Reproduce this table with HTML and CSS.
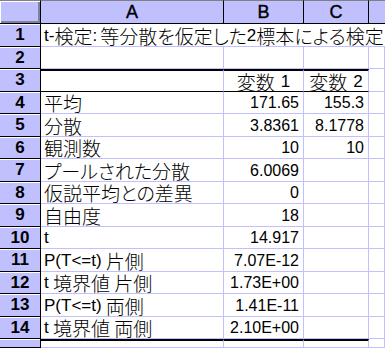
FILE: index.html
```html
<!DOCTYPE html>
<html lang="ja">
<head>
<meta charset="utf-8">
<link rel="stylesheet" href="styles.css">
</head>
<body>
<div class="sheet">
  <div class="corner"></div>
  <div class="ch">A</div>
  <div class="ch">B</div>
  <div class="ch">C</div>
  <div class="ch last"></div>

  <div class="rh">1</div>
  <div class="c title"><span class="lat">t-</span>検定<span class="lat gap">:</span>等分散を仮定した<span class="lat">2</span>標本による検定</div>

  <div class="rh">2</div>
  <div class="c"></div><div class="c"></div><div class="c"></div><div class="c"></div>

  <div class="rh">3</div>
  <div class="c top2 bot1"></div>
  <div class="c top2 bot1 mid">変数<span class="lat idx">1</span></div>
  <div class="c top2 bot1 mid">変数<span class="lat idx">2</span></div>
  <div class="c"></div>

  <div class="rh">4</div>
  <div class="c">平均</div><div class="c num">171.65</div><div class="c num">155.3</div><div class="c"></div>

  <div class="rh">5</div>
  <div class="c">分散</div><div class="c num">3.8361</div><div class="c num">8.1778</div><div class="c"></div>

  <div class="rh">6</div>
  <div class="c">観測数</div><div class="c num">10</div><div class="c num">10</div><div class="c"></div>

  <div class="rh">7</div>
  <div class="c">プールされた分散</div><div class="c num">6.0069</div><div class="c"></div><div class="c"></div>

  <div class="rh">8</div>
  <div class="c">仮説平均との差異</div><div class="c num">0</div><div class="c"></div><div class="c"></div>

  <div class="rh">9</div>
  <div class="c">自由度</div><div class="c num">18</div><div class="c"></div><div class="c"></div>

  <div class="rh">10</div>
  <div class="c"><span class="lat">t</span></div><div class="c num">14.917</div><div class="c"></div><div class="c"></div>

  <div class="rh">11</div>
  <div class="c"><span class="lat">P(T&lt;=t)</span>&nbsp;片側</div><div class="c num">7.07E-12</div><div class="c"></div><div class="c"></div>

  <div class="rh">12</div>
  <div class="c"><span class="lat">t</span>&nbsp;境界値&nbsp;片側</div><div class="c num">1.73E+00</div><div class="c"></div><div class="c"></div>

  <div class="rh">13</div>
  <div class="c"><span class="lat">P(T&lt;=t)</span>&nbsp;両側</div><div class="c num">1.41E-11</div><div class="c"></div><div class="c"></div>

  <div class="rh">14</div>
  <div class="c"><span class="lat">t</span>&nbsp;境界値&nbsp;両側</div><div class="c num">2.10E+00</div><div class="c"></div><div class="c"></div>

  <div class="rh"></div>
  <div class="c top2"></div><div class="c top2"></div><div class="c top2"></div><div class="c"></div>
</div>
</body>
</html>
```
FILE: styles.css
```css
html, body {
  margin: 0;
  padding: 0;
  background: #ffffff;
}

.sheet {
  display: grid;
  grid-template-columns: 41px 183px 80px 65px 16px;
  grid-template-rows: 24px repeat(7, 23px 22px) 9px;
  width: 385px;
  height: 348px;
  overflow: hidden;
  font-family: "Noto Sans CJK JP", sans-serif;
  font-feature-settings: "palt";
  color: #000;
}

.corner,
.ch,
.rh {
  box-sizing: border-box;
  background: #c0c0ff;
  border-right: 1px solid #000;
  border-bottom: 1px solid #000;
  display: flex;
  align-items: center;
  justify-content: center;
  font-family: "Liberation Sans", sans-serif;
  font-weight: bold;
  font-size: 17px;
  line-height: 20px;
}

.corner {
  border-top: 1px solid #808080;
  box-shadow: inset 1px 1px #ffffff, inset -2px -2px #8080a0;
}

.ch {
  border-top: 1px solid #808080;
  font-weight: normal;
  font-size: 18px;
  -webkit-text-stroke: 0.4px #000;
}

.ch.last {
  border-right: none;
}

.rh {
  box-shadow: inset 0 1px #ffffff;
}

.c {
  box-sizing: border-box;
  border-right: 1px solid #c0c0ff;
  border-bottom: 1px solid #c0c0ff;
  white-space: nowrap;
  overflow: hidden;
  display: flex;
  align-items: center;
  padding: 0 3px;
  font-size: 19px;
  line-height: 21px;
  font-weight: 300;
}

.lat,
.num {
  font-family: "Liberation Sans", sans-serif;
  font-weight: normal;
}

.lat {
  font-size: 17px;
}

.gap {
  padding-right: 3px;
}

.idx {
  margin-left: 6px;
}

.num {
  justify-content: flex-end;
  padding-right: 4px;
  font-size: 16px;
}

.mid {
  justify-content: center;
}

.title {
  grid-column: 2 / span 4;
  border-right: none;
  padding-right: 0;
}

.top2 {
  border-top: 2px solid #000;
}

.bot1 {
  border-bottom: 1px solid #000;
}
```
